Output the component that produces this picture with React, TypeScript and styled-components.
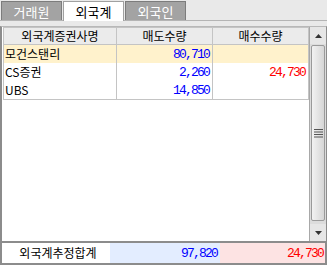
import React from "react";
import styled, { createGlobalStyle } from "styled-components";

const Global = createGlobalStyle`
  html, body { margin: 0; padding: 0; background: #ffffff; }
  * { box-sizing: border-box; }
`;

const KR = `"Noto Sans CJK KR", "Noto Sans", sans-serif`;
const NUM = `"Liberation Mono", "DejaVu Sans Mono", monospace`;

const Frame = styled.div`
  width: 327px;
  height: 265px;
  background: #e9e9e9;
  display: flex;
  flex-direction: column;
  font-family: ${KR};
  font-size: 12px;
  overflow: hidden;
`;

const TabBar = styled.div`
  height: 21px;
  display: flex;
  align-items: flex-end;
  padding-left: 1px;
  gap: 1px;
  border-bottom: 1px solid #b4b4b4;
`;

const Tab = styled.div<{ $active?: boolean }>`
  width: 61px;
  height: ${(p) => (p.$active ? "20px" : "19px")};
  margin-bottom: ${(p) => (p.$active ? "-1px" : "0")};
  display: flex;
  align-items: center;
  justify-content: center;
  background: ${(p) => (p.$active ? "#ffffff" : "#a3a3a3")};
  color: ${(p) => (p.$active ? "#000000" : "#ffffff")};
  border: 1px solid ${(p) => (p.$active ? "#a0a0a0" : "#7c7c7c")};
  border-bottom: none;
  font-size: 13px;
  line-height: 1;
`;

const Gap = styled.div`
  height: 5px;
  background: #e9e9e9;
`;

const Panel = styled.div`
  flex: 1;
  display: flex;
  border-left: 2px solid #8c8c8c;
  border-right: 1px solid #8c8c8c;
  border-top: 1px solid #b8b8b8;
  background: #ffffff;
  min-height: 0;
`;

const TableArea = styled.div`
  flex: 1;
  padding-left: 1px;
  display: flex;
  flex-direction: column;
`;

const Grid = styled.div`
  display: grid;
  grid-template-columns: 113px 96px 96px;
  border-top: 1px solid #c4c4c4;
  border-left: 1px solid #c4c4c4;
  width: fit-content;
`;

const HeadCell = styled.div`
  height: 17px;
  background: #ebebeb;
  border-right: 1px solid #c4c4c4;
  border-bottom: 1px solid #c4c4c4;
  display: flex;
  align-items: center;
  justify-content: center;
  color: #000;
  line-height: 1;
`;

const Cell = styled.div<{ $hl?: boolean; $num?: boolean; $color?: string }>`
  height: 18px;
  background: ${(p) => (p.$hl ? "#fff2cc" : "#ffffff")};
  border-right: 1px solid #c4c4c4;
  display: flex;
  align-items: center;
  justify-content: ${(p) => (p.$num ? "flex-end" : "flex-start")};
  padding: ${(p) => (p.$num ? "0 3px 0 0" : "0 0 0 1px")};
  color: ${(p) => p.$color || "#000"};
  font-family: ${(p) => (p.$num ? NUM : KR)};
  font-size: ${(p) => (p.$num ? "13px" : "12px")};
  letter-spacing: ${(p) => (p.$num ? "-1.8px" : "0")};
  line-height: 1;
`;

const LastRowLine = styled.div`
  grid-column: 1 / -1;
  height: 1px;
  background: #c4c4c4;
  margin-left: -1px;
`;

const Scrollbar = styled.div`
  width: 17px;
  display: flex;
  flex-direction: column;
  background: #dcdcdc;
  border-left: 1px solid #a8a8a8;
`;

const ArrowBtn = styled.div`
  height: 17px;
  display: flex;
  align-items: center;
  justify-content: center;
  background: #e6e6e6;
`;

const Thumb = styled.div`
  height: 176px;
  margin: 1px 1px;
  border: 1px solid #9a9a9a;
  border-radius: 2px;
  background: linear-gradient(to right, #f2f2f2, #d6d6d6);
  display: flex;
  align-items: center;
  justify-content: center;
`;

const Track = styled.div`
  flex: 1;
`;

const Footer = styled.div`
  height: 24px;
  display: flex;
  border: 2px solid #8c8c8c;
`;

const FootCell = styled.div<{ $w: number; $bg: string; $color: string; $num?: boolean }>`
  width: ${(p) => p.$w}px;
  background: ${(p) => p.$bg};
  color: ${(p) => p.$color};
  display: flex;
  align-items: center;
  justify-content: ${(p) => (p.$num ? "flex-end" : "center")};
  padding: ${(p) => (p.$num ? "0 3px 0 0" : "0 0 0 4px")};
  font-family: ${(p) => (p.$num ? NUM : KR)};
  font-size: ${(p) => (p.$num ? "13px" : "12px")};
  letter-spacing: ${(p) => (p.$num ? "-1.8px" : "0")};
  line-height: 1;
`;

const FootFill = styled.div<{ $bg: string; $color: string }>`
  flex: 1;
  background: ${(p) => p.$bg};
  color: ${(p) => p.$color};
  display: flex;
  align-items: center;
  justify-content: flex-end;
  padding-right: 2px;
  font-family: ${NUM};
  font-size: 13px;
  letter-spacing: -1.8px;
  line-height: 1;
`;

const rows = [
  { name: "모건스탠리", sell: "80,710", buy: "", hl: true },
  { name: "CS증권", sell: "2,260", buy: "24,730", hl: false },
  { name: "UBS", sell: "14,850", buy: "", hl: false },
];

export default function App() {
  return (
    <>
      <Global />
      <Frame>
        <TabBar>
          <Tab>거래원</Tab>
          <Tab $active>외국계</Tab>
          <Tab>외국인</Tab>
        </TabBar>
        <Gap />
        <Panel>
          <TableArea>
            <Grid>
              <HeadCell>외국계증권사명</HeadCell>
              <HeadCell>매도수량</HeadCell>
              <HeadCell>매수수량</HeadCell>
              {rows.map((r) => (
                <React.Fragment key={r.name}>
                  <Cell $hl={r.hl}>{r.name}</Cell>
                  <Cell $hl={r.hl} $num $color="#0000ff">{r.sell}</Cell>
                  <Cell $hl={r.hl} $num $color="#ff0000">{r.buy}</Cell>
                </React.Fragment>
              ))}
              <LastRowLine />
            </Grid>
          </TableArea>
          <Scrollbar>
            <ArrowBtn>
              <svg width="7" height="4" viewBox="0 0 7 4"><polygon points="3.5,0 7,4 0,4" fill="#333" /></svg>
            </ArrowBtn>
            <Thumb>
              <svg width="9" height="9" viewBox="0 0 9 9">
                <rect x="0" y="0" width="9" height="1" fill="#555" />
                <rect x="0" y="2.5" width="9" height="1" fill="#555" />
                <rect x="0" y="5" width="9" height="1" fill="#555" />
                <rect x="0" y="7.5" width="9" height="1" fill="#555" />
              </svg>
            </Thumb>
            <Track />
            <ArrowBtn>
              <svg width="7" height="4" viewBox="0 0 7 4"><polygon points="0,0 7,0 3.5,4" fill="#333" /></svg>
            </ArrowBtn>
          </Scrollbar>
        </Panel>
        <Footer>
          <FootCell $w={108} $bg="#ffffff" $color="#000">외국계추정합계</FootCell>
          <FootCell $w={110} $bg="#e3edff" $color="#0000ff" $num>97,820</FootCell>
          <FootFill $bg="#fde3e3" $color="#ff0000">24,730</FootFill>
        </Footer>
      </Frame>
    </>
  );
}
